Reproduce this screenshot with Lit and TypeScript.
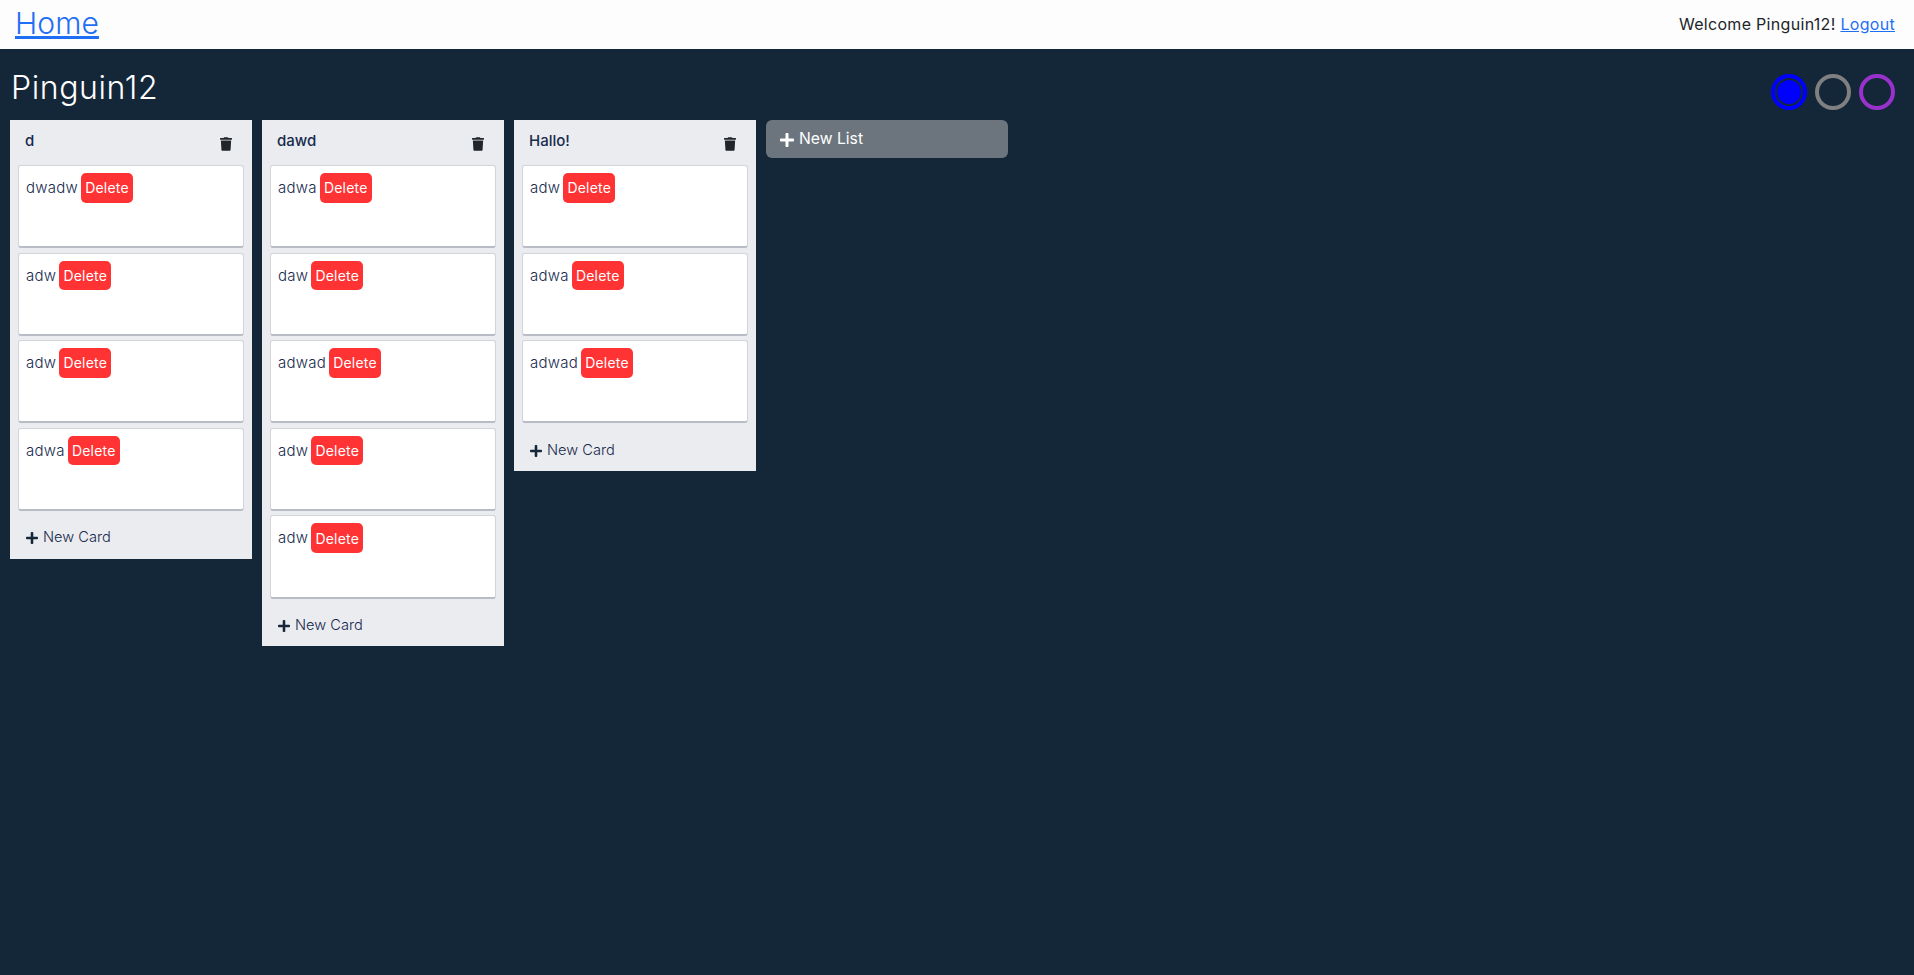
import { LitElement, html, css, svg } from "lit";
import { customElement } from "lit/decorators.js";

const trash = svg`<path d="M432 32H312l-9.4-18.7A24 24 0 0 0 281.1 0H166.8a23.72 23.72 0 0 0-21.4 13.3L136 32H16A16 16 0 0 0 0 48v32a16 16 0 0 0 16 16h416a16 16 0 0 0 16-16V48a16 16 0 0 0-16-16zM53.2 467a48 48 0 0 0 47.9 45h245.8a48 48 0 0 0 47.9-45L416 128H32z"/>`;
const plus = svg`<path d="M416 208H272V64c0-17.67-14.33-32-32-32h-32c-17.67 0-32 14.33-32 32v144H32c-17.67 0-32 14.33-32 32v32c0 17.67 14.33 32 32 32h144v144c0 17.67 14.33 32 32 32h32c17.67 0 32-14.33 32-32V304h144c17.67 0 32-14.33 32-32v-32c0-17.67-14.33-32-32-32z"/>`;

const lists = [
  { title: "d", cards: ["dwadw", "adw", "adw", "adwa"] },
  { title: "dawd", cards: ["adwa", "daw", "adwad", "adw", "adw"] },
  { title: "Hallo!", cards: ["adw", "adwa", "adwad"] },
];

@customElement("app-root")
export class AppRoot extends LitElement {
  static styles = css`
    :host {
      display: block;
      min-height: 975px;
      background: #142739;
      font-family: Inter, "Noto Sans", sans-serif;
      color: #212529;
    }
    .nav {
      height: 49px;
      background: #fdfdfd;
      display: flex;
      justify-content: space-between;
      align-items: center;
      padding: 0 19px 2px 15px;
      box-sizing: border-box;
    }
    a { color: #1f6ff5; text-decoration: underline; }
    .home { font-size: 30px; font-weight: 300; letter-spacing: 0.1px; margin-top: -1px; }
    .welcome { font-size: 16px; font-weight: 400; letter-spacing: 0.31px; }
    .head {
      height: 71px;
      display: flex;
      justify-content: space-between;
      align-items: flex-start;
      padding: 0 19px 0 11px;
      box-sizing: border-box;
    }
    h1 {
      margin: 15px 0 0;
      font-size: 32px;
      line-height: 48px;
      font-weight: 300;
      letter-spacing: 0.6px;
      color: #fff;
    }
    .themes { display: flex; gap: 8px; padding-top: 25px; }
    .theme {
      width: 36px; height: 36px;
      border-radius: 50%;
      box-sizing: border-box;
      border: 4px solid var(--c);
    }
    .theme.on { padding: 2px; }
    .theme.on::before {
      content: ""; display: block; width: 100%; height: 100%;
      border-radius: 50%; background: var(--c);
    }
    .board { display: flex; align-items: flex-start; gap: 10px; padding-left: 10px; }
    .list { width: 242px; background: #ebecf0; }
    .list-head {
      height: 45px;
      display: flex;
      justify-content: space-between;
      align-items: center;
      padding: 0 20px 5px 15px;
      box-sizing: border-box;
      font-size: 15px;
      font-weight: 500;
      color: #172b4d;
    }
    .list-head svg { width: 12px; height: 14px; fill: #212529; margin-top: 7px; }
    .cards { display: flex; flex-direction: column; gap: 4.3px; padding: 0 8px; }
    .card {
      height: 83.3px;
      box-sizing: border-box;
      background: #fff;
      border: 1px solid #d3d4d8;
      border-bottom: 2px solid #b9bcc5;
      border-radius: 3px;
      padding: 7px 7px;
      display: flex;
      align-items: flex-start;
      gap: 3px;
      font-size: 15px;
      font-weight: 300;
      letter-spacing: 0.25px;
      color: #172b4d;
    }
    .card span { line-height: 24px; margin-top: 3px; }
    .del {
      font: inherit;
      font-size: 14px;
      font-weight: 400;
      letter-spacing: 0.2px;
      border: 0;
      margin: 0;
      height: 29.6px;
      padding: 0;
      width: 52px;
      white-space: nowrap;
      text-align: center;
      border-radius: 5px;
      background: #ff3333;
      color: #fff;
    }
    .new-card {
      height: 47.5px;
      display: flex;
      align-items: center;
      gap: 5px;
      padding: 5px 0 0 16px;
      box-sizing: border-box;
      font-size: 14.6px;
      font-weight: 300;
      color: #172b4d;
    }
    .new-card svg { width: 12px; height: 14px; fill: #152738; margin-top: 2px; }
    .new-list {
      width: 242px;
      height: 38px;
      box-sizing: border-box;
      border-radius: 6px;
      background: #6c757d;
      color: #fff;
      display: flex;
      align-items: center;
      gap: 5px;
      padding: 0 0 2px 14px;
      font-size: 15.7px;
      font-weight: 400;
    }
    .new-list svg { width: 14px; height: 16px; fill: #fff; margin-top: 4px; }
  `;

  render() {
    return html`
      <div class="nav">
        <a class="home" href="#">Home</a>
        <div class="welcome">Welcome Pinguin12! <a href="#">Logout</a></div>
      </div>
      <div class="head">
        <h1>Pinguin12</h1>
        <div class="themes">
          <div class="theme on" style="--c:#0000ff"></div>
          <div class="theme" style="--c:#808080"></div>
          <div class="theme" style="--c:#9932cc"></div>
        </div>
      </div>
      <div class="board">
        ${lists.map(
          (l) => html`
            <div class="list">
              <div class="list-head">
                <span>${l.title}</span>
                <svg viewBox="0 0 448 512">${trash}</svg>
              </div>
              <div class="cards">
                ${l.cards.map(
                  (c) => html`<div class="card"><span>${c}</span><button class="del">Delete</button></div>`
                )}
              </div>
              <div class="new-card"><svg viewBox="0 0 448 512">${plus}</svg>New Card</div>
            </div>
          `
        )}
        <div class="new-list"><svg viewBox="0 0 448 512">${plus}</svg>New List</div>
      </div>
    `;
  }
}
